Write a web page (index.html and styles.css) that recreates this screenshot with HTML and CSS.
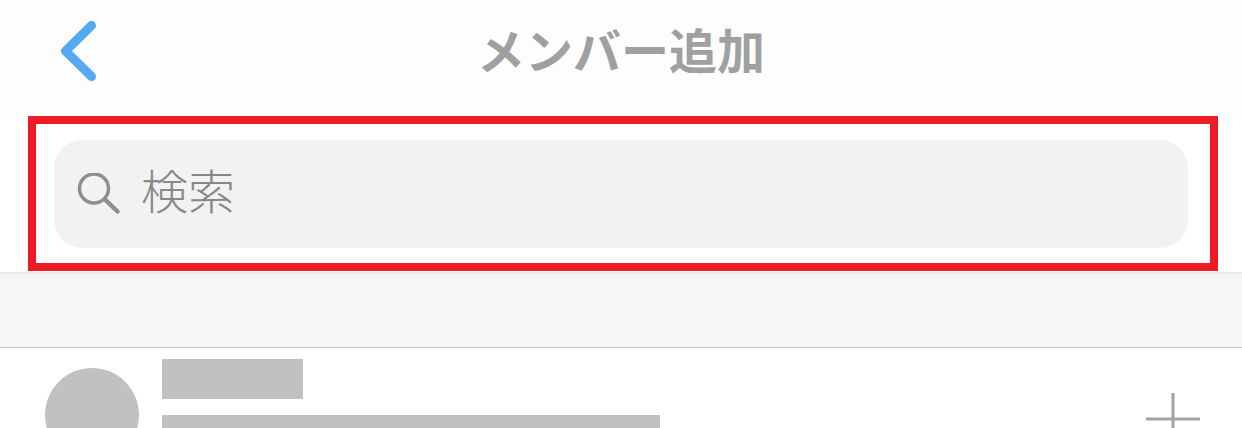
FILE: index.html
```html
<!DOCTYPE html>
<html lang="ja">
<head>
    <meta charset="UTF-8">
    <meta name="viewport" content="width=device-width, initial-scale=1.0">
    <title>メンバー追加</title>
    <link rel="stylesheet" href="styles.css">
</head>
<body>
    <header class="nav">
        <a class="back" href="#" aria-label="戻る">
            <svg width="40" height="64" viewBox="0 0 40 64">
                <path d="M32.500 6.500 L6.500 32 L32.500 57.500" fill="none" stroke="#55a9f3" stroke-width="9" stroke-linecap="round" stroke-linejoin="round"/>
            </svg>
        </a>
        <h1>メンバー追加</h1>
    </header>
    <section class="search-area">
        <div class="highlight">
            <div class="search">
                <svg class="search-icon" width="44" height="44" viewBox="0 0 44 44">
                    <circle cx="17" cy="15.500" r="14.500" fill="none" stroke="#8e8e93" stroke-width="3.500"/>
                    <path d="M28 26.500 L40.500 38.500" fill="none" stroke="#8e8e93" stroke-width="4.500" stroke-linecap="round"/>
                </svg>
                <span class="placeholder">検索</span>
            </div>
        </div>
    </section>
    <div class="spacer"></div>
    <div class="member">
        <div class="avatar"></div>
        <div class="info">
            <div class="name"></div>
            <div class="detail"></div>
        </div>
        <svg class="add" width="54" height="60" viewBox="0 0 54 60">
            <path d="M27 0 V60 M0 26 H54" fill="none" stroke="#a3a3a3" stroke-width="3"/>
        </svg>
    </div>
</body>
</html>
```
FILE: styles.css
```css
html, body {
    height: 428px;
    overflow: hidden;
}
body {
    margin: 0;
    background-color: #fff;
    font-family: "Liberation Sans", "Noto Sans CJK JP", sans-serif;
}
.nav {
    height: 120px;
    box-sizing: border-box;
    padding-bottom: 14px;
    background-color: #fdfdfd;
    display: flex;
    align-items: center;
    justify-content: center;
    position: relative;
}
.nav h1 {
    margin: 0;
    font-size: 48px;
    font-weight: 700;
    color: #a0a0a0;
    line-height: 1;
}
.back {
    position: absolute;
    left: 59px;
    top: 19px;
    display: block;
    height: 64px;
}
.search-area {
    box-sizing: border-box;
    height: 154px;
    padding: 0 24px 0 28px;
    border-bottom: 2px solid #eaeaea;
}
.highlight {
    height: 155px;
    box-sizing: border-box;
    position: relative;
    top: -4px;
    border: 8px solid #ed1c24;
    padding: 16px 22px 15px 18px;
}
.search {
    height: 108px;
    background-color: #f2f2f3;
    border-radius: 28px;
    display: flex;
    align-items: center;
    padding-left: 23px;
}
.search-icon {
    margin-top: 2px;
}
.placeholder {
    margin-left: 20px;
    margin-bottom: 4px;
    font-size: 47px;
    font-weight: 300;
    color: #88888c;
    line-height: 1;
}
.spacer {
    height: 73px;
    background-color: #f7f6f4;
    border-bottom: 1px solid #c9c8c8;
}
.member {
    display: flex;
    align-items: flex-start;
    padding-left: 45px;
    height: 80px;
    overflow: hidden;
}
.avatar {
    width: 94px;
    height: 94px;
    margin-top: 20px;
    border-radius: 50%;
    background-color: #c1c1c1;
    flex: none;
}
.info {
    margin-left: 23px;
    margin-top: 11px;
}
.name {
    width: 141px;
    height: 40px;
    background-color: #c1c1c1;
}
.detail {
    width: 498px;
    height: 40px;
    margin-top: 16px;
    background-color: #c1c1c1;
}
.add {
    margin-left: auto;
    margin-right: 42px;
    margin-top: 45px;
    flex: none;
}
```
